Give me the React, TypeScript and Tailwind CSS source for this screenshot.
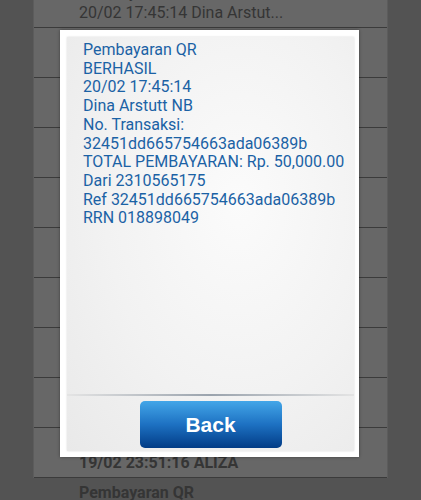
import React from 'react'

const rows = [
  { title: 'Pembayaran QR', sub: '20/02 17:45:14 Dina Arstut...', bold: false },
  { title: 'Pembayaran QR', sub: '20/02 12:10:02 WARUNG SARI', bold: false },
  { title: 'Pembayaran QR', sub: '20/02 09:31:47 TOKO MAJU', bold: false },
  { title: 'Pembayaran QR', sub: '20/02 08:05:21 KOPI KITA', bold: false },
  { title: 'Pembayaran QR', sub: '19/02 21:44:10 BAKSO PAK...', bold: false },
  { title: 'Pembayaran QR', sub: '19/02 19:02:33 RM PADANG', bold: false },
  { title: 'Pembayaran QR', sub: '19/02 17:12:58 INDOMARET', bold: false },
  { title: 'Pembayaran QR', sub: '19/02 15:40:09 ALFAMART', bold: false },
  { title: 'Pembayaran QR', sub: '19/02 12:20:45 MIE AYAM', bold: false },
  { title: 'Pembayaran QR', sub: '19/02 23:51:16 ALIZA', bold: true },
  { title: 'Pembayaran QR', sub: '19/02 22:10:04 ALIZA', bold: true },
]

const lines = [
  'Pembayaran QR',
  'BERHASIL',
  '20/02 17:45:14',
  'Dina Arstutt NB',
  'No. Transaksi:',
  '32451dd665754663ada06389b',
  'TOTAL PEMBAYARAN: Rp. 50,000.00',
  'Dari 2310565175',
  'Ref 32451dd665754663ada06389b',
  'RRN 018898049',
]

export default function App() {
  return (
    <div className="relative h-[500px] w-[421px] overflow-hidden bg-[#535353] font-['Roboto',sans-serif]">
      {/* dimmed history list behind the dialog */}
      <div className="mx-[33px] h-full bg-[#676767] border-x border-[#5c5c5c]">
        <div className="-mt-[22px]">
          {rows.map((r, i) => (
            <div key={i} className="h-[50px] border-b border-[#3b3b3b] pl-[45px] text-[16px] leading-[20px] text-[#353535]">
              <div className={`pt-[5px] ${r.bold ? 'font-bold' : ''}`}>{r.title}</div>
              <div className={r.bold ? 'font-bold' : ''}>{r.sub}</div>
            </div>
          ))}
        </div>
      </div>

      {/* dialog */}
      <div className="absolute left-[60px] top-[30px] w-[299px] h-[427px] bg-white pl-[7px] pt-[7px] pr-[5px] pb-[6px] shadow-[0_0_3px_rgba(0,0,0,0.4)]">
        <div className="flex h-full flex-col bg-[radial-gradient(ellipse_at_60%_40%,#fbfbfb_0%,#f2f2f2_55%,#e9e9e9_100%)] shadow-[0_0_2px_rgba(0,0,0,0.15)]">
          <div className="flex-1 pl-[16px] pt-[4px] text-[16px] leading-[18.7px] text-[#1b62a5]">
            {lines.map((l, i) => (
              <div key={i}>{l}</div>
            ))}
          </div>
          <div className="h-[2px] bg-[linear-gradient(to_right,#e4e4e4,#9aa3ad_50%,#e4e4e4)]" />
          <div className="flex h-[55px] justify-center pt-[5px]">
            <button className="h-[47px] w-[142px] rounded-[5px] bg-[linear-gradient(to_bottom,#43a6e8_0%,#1d71c2_50%,#023c86_100%)] font-['Liberation_Sans',Arial,sans-serif] text-[21px] font-bold text-white">
              Back
            </button>
          </div>
        </div>
      </div>
    </div>
  )
}
